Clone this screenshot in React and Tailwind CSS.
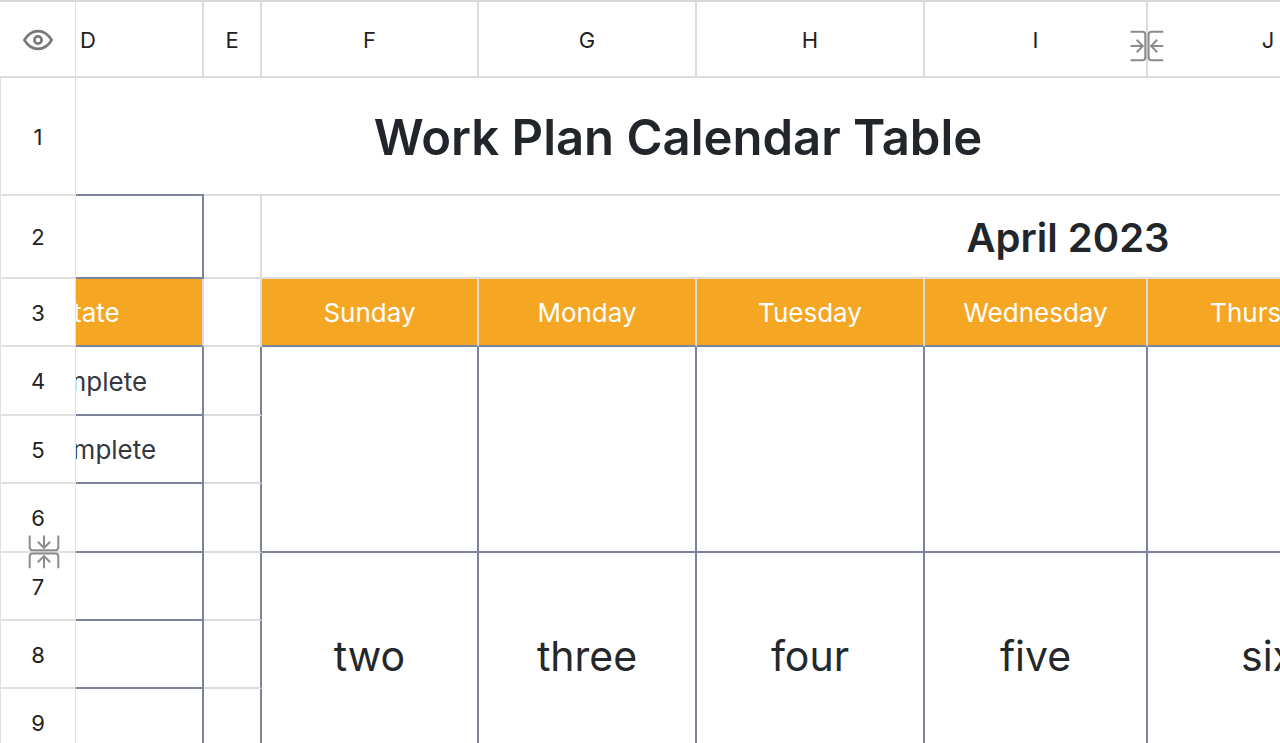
import { useLayoutEffect, useRef } from "react";

const CENTER = "px-0 pb-0 pt-0.5 text-center align-middle whitespace-nowrap";
const ROW_HEAD =
  "sticky left-0 bg-white px-0 pb-0 pt-px text-center align-middle text-[22px] leading-7 font-normal text-[#222] border-l border-r border-[#e0e0e0]";
const COL_HEAD =
  "h-[78px] px-0 pb-0 pt-0.5 text-center align-middle text-[22px] leading-7 font-normal border-t-2 border-r-2 border-b-2 border-t-[#d8d8d8] border-r-[#dcdcdc] border-b-[#dcdcdc]";
const TASK = `${CENTER} text-[26px] leading-8 text-[#35393f] border-r-2 border-b-2 border-[#7e839c]`;
const GAP = "p-0 border-r-2 border-b-2 border-r-[#7e839c] border-b-[#dcdcdc]";
const DAY = `${CENTER} text-[41px] leading-[52px] text-[#24272b] border-r-2 border-b-2 border-[#7e839c]`;
const DAY_HEAD = `${CENTER} bg-[#f5a623] text-[26px] leading-8 font-normal text-white border-r-2 border-b-2 border-r-[#dcdcdc] border-b-[#7e839c]`;

const DAYS = ["Sunday", "Monday", "Tuesday", "Wednesday", "Thursday", "Friday", "Saturday"];
const WEEK = ["two", "three", "four", "five", "six", "seven", "eight"];

function EyeIcon() {
  return (
    <svg width="32" height="24" viewBox="0 0 32 24" fill="none" stroke="#787878" strokeWidth="2.6" aria-hidden="true">
      <path d="M2.300 12C6 6 10.500 3.100 16 3.100S26 6 29.700 12C26 18 21.500 20.900 16 20.900S6 18 2.300 12Z" strokeLinejoin="round" />
      <circle cx="16" cy="12" r="3.600" />
    </svg>
  );
}

function CollapseIcon({ className }) {
  return (
    <svg className={className} width="34" height="32" viewBox="0 0 34 32" fill="none" stroke="#8c8c8c" strokeWidth="2" aria-hidden="true">
      <path d="M.5 1.700H12.300q3 0 3 3v22.600q0 3-3 3H.5M33.300 1.700H21.600q-3 0-3 3v22.600q0 3 3 3H33.300" />
      <path d="M.5 16h12M6.700 9.800 12.800 16l-6.100 6.200M33.300 16H21.300M27.200 9.800 21.100 16l6.100 6.200" />
    </svg>
  );
}

function TaskCells({ state = "" }) {
  return (
    <>
      <td className={TASK} />
      <td className={TASK} />
      <td className={TASK} />
      <td className={TASK}>{state}</td>
      <td className={GAP} />
    </>
  );
}

export default function App() {
  const pane = useRef(null);
  const firstVisible = useRef(null);

  useLayoutEffect(() => {
    pane.current.scrollLeft = firstVisible.current.offsetLeft + 26;
  }, []);

  return (
    <main
      ref={pane}
      className="relative h-screen overflow-auto bg-white font-['Inter','Liberation_Sans',sans-serif] text-[#222] [scrollbar-width:none]"
    >
      <table className="w-[2468px] table-fixed border-separate border-spacing-0">
        <colgroup>
          <col className="w-[76px]" />
          <col className="w-[164px]" />
          <col className="w-[164px]" />
          <col className="w-[164px]" />
          <col className="w-[230px]" />
          <col className="w-[58px]" />
          <col className="w-[217px]" />
          <col className="w-[218px]" />
          <col className="w-[228px]" />
          <col className="w-[223px]" />
          <col className="w-[242px]" />
          <col className="w-[242px]" />
          <col className="w-[242px]" />
        </colgroup>
        <thead>
          <tr>
            <th className="sticky left-0 z-10 border-t-2 border-r border-b-2 border-t-[#d8d8d8] border-r-[#e0e0e0] border-b-[#dcdcdc] bg-white px-0 pt-0.5 pb-0">
              <button type="button" aria-label="Show hidden cells" className="flex w-full items-center justify-center">
                <EyeIcon />
              </button>
            </th>
            {["A", "B", "C", "D", "E", "F", "G", "H"].map((name) => (
              <th key={name} scope="col" ref={name === "D" ? firstVisible : null} className={COL_HEAD}>
                {name}
              </th>
            ))}
            <th scope="col" className={`${COL_HEAD} relative`}>
              I
              <button type="button" aria-label="Collapse column" className="absolute top-7 -right-[18px]">
                <CollapseIcon className="block" />
              </button>
            </th>
            {["J", "K", "L"].map((name) => (
              <th key={name} scope="col" className={COL_HEAD}>
                {name}
              </th>
            ))}
          </tr>
        </thead>
        <tbody>
          <tr className="h-[116px]">
            <th scope="row" className={`${ROW_HEAD} z-10`}>1</th>
            <td colSpan={12} className="px-0 pt-1 pb-0 text-center align-middle text-[49px] leading-[64px] font-semibold whitespace-nowrap text-[#22262a]">
              Work Plan Calendar Table
            </td>
          </tr>
          <tr className="h-[85px]">
            <th scope="row" className={`${ROW_HEAD} z-10 border-t-2 border-b-2`}>2</th>
            <td colSpan={4} className="border-2 border-[#7e839c] p-0" />
            <td className="border-t-2 border-r-2 border-b-2 border-[#dcdcdc] p-0" />
            <td colSpan={7} className={`${CENTER} border-t-2 border-b-2 border-[#dcdcdc] text-[40px] leading-[52px] font-semibold text-[#22262a]`}>
              April 2023
            </td>
          </tr>
          <tr className="h-[68px]">
            <th scope="row" className={`${ROW_HEAD} z-10 border-b-2`}>3</th>
            <th scope="col" className={DAY_HEAD}>Task</th>
            <th scope="col" className={DAY_HEAD}>Start</th>
            <th scope="col" className={DAY_HEAD}>End</th>
            <th scope="col" className={DAY_HEAD}>State</th>
            <td className="border-r-2 border-b-2 border-[#dcdcdc] p-0" />
            {DAYS.map((day) => (
              <th key={day} scope="col" className={DAY_HEAD}>{day}</th>
            ))}
          </tr>
          <tr className="h-[69px]">
            <th scope="row" className={`${ROW_HEAD} z-10 border-b-2`}>4</th>
            <TaskCells state="Complete" />
            {DAYS.map((day) => (
              <td key={day} rowSpan={3} className={DAY} />
            ))}
          </tr>
          <tr className="h-[68px]">
            <th scope="row" className={`${ROW_HEAD} z-10 border-b-2`}>5</th>
            <TaskCells state="Incomplete" />
          </tr>
          <tr className="h-[69px]">
            <th scope="row" className={`${ROW_HEAD} z-20 border-b-2`}>
              6
              <button type="button" aria-label="Collapse row" className="absolute -bottom-[17px] left-[26px]">
                <CollapseIcon className="block rotate-90" />
              </button>
            </th>
            <TaskCells />
          </tr>
          <tr className="h-[68px]">
            <th scope="row" className={`${ROW_HEAD} z-10 border-b-2`}>7</th>
            <TaskCells />
            {WEEK.map((word) => (
              <td key={word} rowSpan={3} className={DAY}>{word}</td>
            ))}
          </tr>
          <tr className="h-[68px]">
            <th scope="row" className={`${ROW_HEAD} z-10 border-b-2`}>8</th>
            <TaskCells />
          </tr>
          <tr className="h-[69px]">
            <th scope="row" className={`${ROW_HEAD} z-10 border-b-2`}>9</th>
            <TaskCells />
          </tr>
        </tbody>
      </table>
    </main>
  );
}
